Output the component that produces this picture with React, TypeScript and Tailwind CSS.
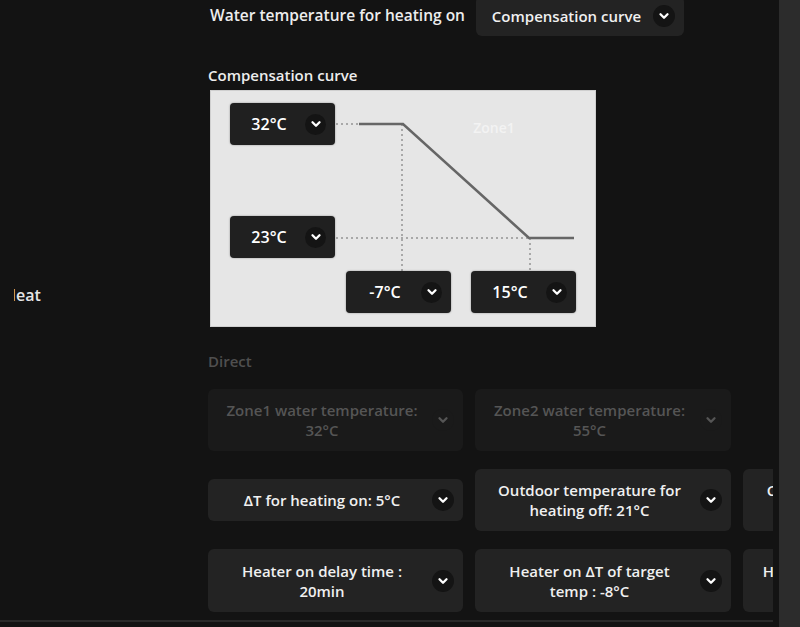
import type { ReactNode } from 'react';

const font = { fontFamily: '"Open Sans", "Noto Sans", sans-serif' };

function Chevron({ size = 22, dim = false }: { size?: number; dim?: boolean }) {
  return (
    <span
      className={`flex shrink-0 items-center justify-center rounded-full ${dim ? 'bg-[#1a1a1a]' : 'bg-[#141414]'}`}
      style={{ width: size, height: size }}
    >
      <svg width="12" height="12" viewBox="0 0 12 12" fill="none">
        <path
          d="M2.5 4.3 L6 7.8 L9.5 4.3"
          stroke={dim ? '#555' : '#fff'}
          strokeWidth="2.3"
          strokeLinecap="round"
          strokeLinejoin="round"
        />
      </svg>
    </span>
  );
}

interface SelectCardProps {
  children: ReactNode;
  className?: string;
  disabled?: boolean;
}

function SelectCard({ children, className = '', disabled = false }: SelectCardProps) {
  return (
    <div
      className={`flex shrink-0 items-center rounded-md pl-2 pr-[9px] text-[15px] font-semibold leading-5 ${
        disabled ? 'bg-[#1a1a1a] text-[#555]' : 'bg-[#232323] text-[#f0f0f0]'
      } ${className}`}
    >
      <div className="flex-1 pr-1 text-center">{children}</div>
      <Chevron dim={disabled} />
    </div>
  );
}

function ChartSelect({ value, className }: { value: string; className: string }) {
  return (
    <div
      className={`absolute flex h-[42px] w-[105px] items-center rounded-[4px] bg-[#202020] pr-[9px] text-[16px] font-semibold text-white shadow-[0_0_2px_rgba(0,0,0,0.4)] ${className}`}
    >
      <div className="flex-1 pl-[3px] text-center">{value}</div>
      <Chevron size={21} />
    </div>
  );
}

function CurveChart() {
  return (
    <div className="relative ml-[2px] mt-[5px] h-[237px] w-[386px] border border-[#cfcfcf] bg-[#e6e6e6]">
      <svg className="absolute left-0 top-0" width="386" height="237">
        <g stroke="#a8a8a8" strokeWidth="2" strokeDasharray="2 3">
          <line x1="125" y1="33" x2="148" y2="33" />
          <line x1="191" y1="33" x2="191" y2="181" />
          <line x1="125" y1="147" x2="318" y2="147" />
          <line x1="319" y1="147" x2="319" y2="181" />
        </g>
        <polyline
          points="148,33 192,33 318,147 363,147"
          fill="none"
          stroke="#666"
          strokeWidth="2.5"
        />
        <text x="283" y="42" textAnchor="middle" fill="#f3f3f3" fontSize="14" fontWeight="600" style={font}>
          Zone1
        </text>
      </svg>
      <ChartSelect value="32°C" className="left-[19px] top-[12px]" />
      <ChartSelect value="23°C" className="left-[19px] top-[125px]" />
      <ChartSelect value="-7°C" className="left-[135px] top-[180px]" />
      <ChartSelect value="15°C" className="left-[260px] top-[180px]" />
    </div>
  );
}

export default function App() {
  return (
    <div className="flex h-[627px] w-[800px] overflow-hidden bg-[#131313]" style={font}>
      <div className="flex w-[773px] shrink-0 flex-col overflow-hidden">
        <div className="flex">
          {/* row label, clipped at the left edge */}
          <div className="w-[208px] shrink-0 pt-[284px]">
            <div className="ml-[14px] w-[60px] overflow-hidden">
              <span className="-ml-[10px] block text-[16px] font-semibold leading-[22px] text-[#e6e6e6]">
                Heat
              </span>
            </div>
          </div>

          <div className="-mt-[4px] flex min-w-0 flex-1 flex-col">
            <div className="flex items-center">
              <div className="w-[268px] shrink-0 pl-[2px] text-[15.5px] font-semibold text-[#ededed]">
                Water temperature for heating on
              </div>
              <SelectCard className="h-[40px] w-[208px]">Compensation curve</SelectCard>
            </div>

            <div className="mt-[29px] text-[15px] font-semibold leading-5 text-[#ededed]">
              Compensation curve
            </div>
            <CurveChart />

            <div className="mt-[24px] text-[15px] font-semibold leading-5 text-[#4f4f4f]">Direct</div>

            <div className="mt-[18px] flex gap-3">
              <SelectCard disabled className="h-[62px] w-[255px]">
                Zone1 water temperature:
                <br />
                32°C
              </SelectCard>
              <SelectCard disabled className="h-[62px] w-[256px]">
                Zone2 water temperature:
                <br />
                55°C
              </SelectCard>
            </div>

            <div className="mt-[18px] flex items-center gap-3">
              <SelectCard className="h-[42px] w-[255px]">ΔT for heating on: 5°C</SelectCard>
              <SelectCard className="h-[62px] w-[256px]">
                Outdoor temperature for
                <br />
                heating off: 21°C
              </SelectCard>
              <SelectCard className="h-[62px] w-[256px]">
                Comfort temperature for
                <br />
                heater off: 18°C
              </SelectCard>
            </div>

            <div className="mt-[18px] flex gap-3">
              <SelectCard className="h-[63px] w-[255px]">
                Heater on delay time :
                <br />
                20min
              </SelectCard>
              <SelectCard className="h-[63px] w-[256px]">
                Heater on ΔT of target
                <br />
                temp : -8°C
              </SelectCard>
              <SelectCard className="h-[63px] w-[256px]">
                Heater off ΔT of the target
                <br />
                temp : 2°C
              </SelectCard>
            </div>
          </div>
        </div>
        <div className="mt-[8px] h-[2px] w-full bg-[#2a2a2a]" />
      </div>
      <div className="w-[6px] shrink-0" />
      <div className="flex-1 bg-[#2c2c2c]" />
    </div>
  );
}
